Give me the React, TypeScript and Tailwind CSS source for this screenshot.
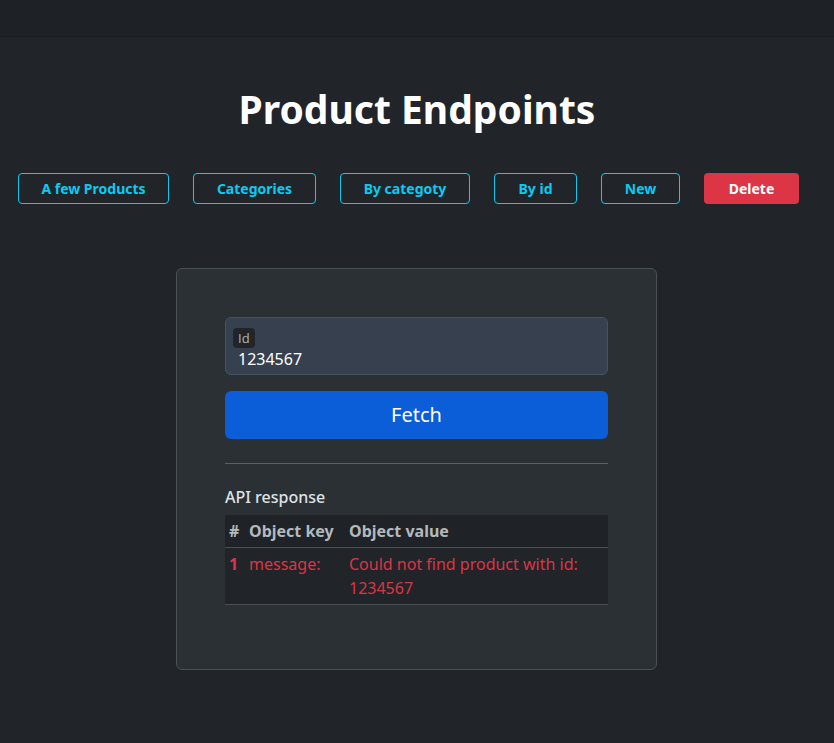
import React from "react";

const endpoints = [
  { label: "A few Products", w: "w-[151px]" },
  { label: "Categories", w: "w-[123px]" },
  { label: "By categoty", w: "w-[130px]" },
  { label: "By id", w: "w-[83px]" },
  { label: "New", w: "w-[79px]" },
];

const App = () => {
  return (
    <div
      className="min-h-[743px] w-full bg-[#212529] text-[#dee2e6] font-['Noto_Sans',sans-serif]"
    >
      {/* navbar */}
      <div className="h-[37px] bg-[#1e2125] border-b border-[#191c1f]"></div>

      <h1 className="mt-[48px] text-center text-[39px] leading-[48px] font-bold text-white">
        Product Endpoints
      </h1>

      <div className="mt-[40px] flex gap-[24px] pl-[18px]">
        {endpoints.map((e) => (
          <button
            key={e.label}
            className={`${e.w} h-[31px] rounded-[4px] border border-[#0dcaf0] pb-[1px] text-[14px] font-bold text-[#0dcaf0]`}
          >
            {e.label}
          </button>
        ))}
        <button className="w-[95px] h-[31px] rounded-[4px] bg-[#dc3545] pb-[1px] text-[14px] font-bold text-white">
          Delete
        </button>
      </div>

      <div className="mt-[64px] ml-[176px] w-[481px] h-[402px] rounded-[6px] border border-[#495057] bg-[#2b3035] px-[48px] pt-[48px]">
        <div className="h-[58px] rounded-[6px] border border-[#4a5260] bg-[#36404f] px-[7px] pt-[7px]">
          <span className="inline-block rounded-[4px] bg-[#212529] px-[5px] font-['Open_Sans',sans-serif] text-[13px] leading-[20px] text-[#adb5bd]">
            Id
          </span>
          <div className="pl-[5px] text-[16px] leading-[20px] text-white">1234567</div>
        </div>

        <button className="mt-[16px] w-full h-[48px] rounded-[6px] bg-[#0b5ed7] text-[20px] text-white">
          Fetch
        </button>

        <hr className="mt-[24px] border-t border-[#5c6166]" />

        <div className="mt-[23px] text-[16px] font-medium leading-[20px] text-[#dee2e6]">
          API response
        </div>

        <table className="mt-[8px] w-full border-collapse text-[16px] leading-[24px]">
          <thead>
            <tr className="bg-[#1f2226] border-b border-[#4b5055] text-[#b4b9be]">
              <th className="w-[20px] px-[4px] py-[4px] text-left font-bold">#</th>
              <th className="w-[100px] px-[4px] py-[4px] text-left font-bold">Object key</th>
              <th className="px-[4px] py-[4px] text-left font-bold">Object value</th>
            </tr>
          </thead>
          <tbody>
            <tr className="bg-[#212428] border-b border-[#4b5055] text-[#dc3545] align-top">
              <td className="px-[4px] py-[4px] font-bold">1</td>
              <td className="px-[4px] py-[4px]">message:</td>
              <td className="px-[4px] py-[4px]">
                Could not find product with id: 1234567
              </td>
            </tr>
          </tbody>
        </table>
      </div>
    </div>
  );
};

export default App;
